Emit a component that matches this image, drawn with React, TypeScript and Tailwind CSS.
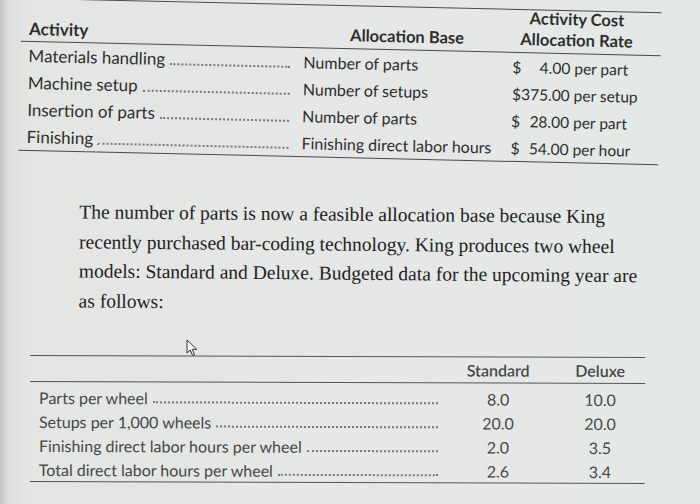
import React from "react";

const topRows = [
  { a: "Materials handling", b: "Number of parts", d: "$", n: "4.00", u: "per part" },
  { a: "Machine setup", b: "Number of setups", d: "", n: "$375.00", u: "per setup" },
  { a: "Insertion of parts", b: "Number of parts", d: "$", n: "28.00", u: "per part" },
  { a: "Finishing", b: "Finishing direct labor hours", d: "$", n: "54.00", u: "per hour" },
];

const bottomRows = [
  { a: "Parts per wheel", s: "8.0", d: "10.0" },
  { a: "Setups per 1,000 wheels", s: "20.0", d: "20.0" },
  { a: "Finishing direct labor hours per wheel", s: "2.0", d: "3.5" },
  { a: "Total direct labor hours per wheel", s: "2.6", d: "3.4" },
];

function Leader() {
  return <span className="flex-1 ml-[5px] mb-[4px] border-b-2 border-dotted border-[#777]" />;
}

export default function App() {
  return (
    <div
      className="relative w-[700px] h-[504px] overflow-hidden bg-[linear-gradient(90deg,#c4c8c4_0px,#dcdfdc_8px,#e3e6e3_30px,#e5e8e6_70%,#e4e9e6_100%)]"
      style={{ fontFamily: "Lato, 'Open Sans', sans-serif" }}
    >
      {/* Top table */}
      <div className="ml-[20px] mt-[5px] w-[640px] rotate-[1.3deg] text-[#2e2e2e] text-[16px]">
        <div className="flex items-end h-[44px] pb-[2px] border-t-[1.5px] border-b-[1.5px] border-[#4a4a4a] font-bold text-[16.5px] leading-[21px]">
          <div className="w-[283px] pl-[8px] text-[17px]">Activity</div>
          <div className="w-[202px] text-center pl-[4px]">Allocation Base</div>
          <div className="w-[155px] text-center pr-[14px]">
            <div>Activity Cost</div>
            <div>Allocation Rate</div>
          </div>
        </div>
        <div className="border-b-[1.5px] border-[#4a4a4a]">
          {topRows.map((r) => (
            <div key={r.a} className="flex items-center h-[27px] leading-[20px]">
              <div className="w-[283px] pl-[8px] pr-[13px] flex items-end text-[17px]">
                <span>{r.a}</span>
                <Leader />
              </div>
              <div className="w-[202px] whitespace-nowrap">{r.b}</div>
              <div className="w-[155px] pl-[7px] flex whitespace-nowrap text-[15.5px]">
                <span className="w-[58px] flex justify-between">
                  <span>{r.d}</span>
                  <span>{r.n}</span>
                </span>
                <span className="ml-[4px]">{r.u}</span>
              </div>
            </div>
          ))}
        </div>
      </div>

      {/* Paragraph */}
      <p
        className="ml-[79px] mt-[42px] w-[600px] text-[19.5px] leading-[29.5px] text-[#222] rotate-[0.5deg] whitespace-nowrap"
        style={{ fontFamily: "'Liberation Serif', 'DejaVu Serif', serif" }}
      >
        The number of parts is now a feasible allocation base because King
        <br />
        recently purchased bar-coding technology. King produces two wheel
        <br />
        models: Standard and Deluxe. Budgeted data for the upcoming year are
        <br />
        as follows:
      </p>

      {/* Bottom table */}
      <div className="ml-[30px] mt-[38px] w-[615px] text-[16px] text-[#474747] rotate-[0.2deg]">
        <div className="flex items-center h-[27px] border-t-[1.5px] border-b-[1.5px] border-[#555] font-semibold">
          <div className="w-[428px]" />
          <div className="w-[80px] text-center">Standard</div>
          <div className="w-[102px] pl-[22px] text-center">Deluxe</div>
        </div>
        <div className="pt-[3px] border-b-[1.5px] border-[#555]">
          {bottomRows.map((r) => (
            <div key={r.a} className="flex items-center h-[24px] leading-[19px]">
              <div className="w-[428px] pl-[9px] pr-[20px] flex items-end">
                <span>{r.a}</span>
                <Leader />
              </div>
              <div className="w-[80px] text-center">{r.s}</div>
              <div className="w-[102px] pl-[22px] text-center">{r.d}</div>
            </div>
          ))}
        </div>
      </div>

      {/* Mouse cursor */}
      <svg
        className="absolute left-[186px] top-[339px]"
        width="13"
        height="18"
        viewBox="0 0 13 18"
      >
        <path
          d="M1 1 L1 14 L4.2 11 L6.6 16.5 L8.6 15.6 L6.3 10.3 L10.8 10.3 Z"
          fill="#f4f4f4"
          stroke="#333"
          strokeWidth="1"
          strokeLinejoin="round"
        />
      </svg>
    </div>
  );
}
